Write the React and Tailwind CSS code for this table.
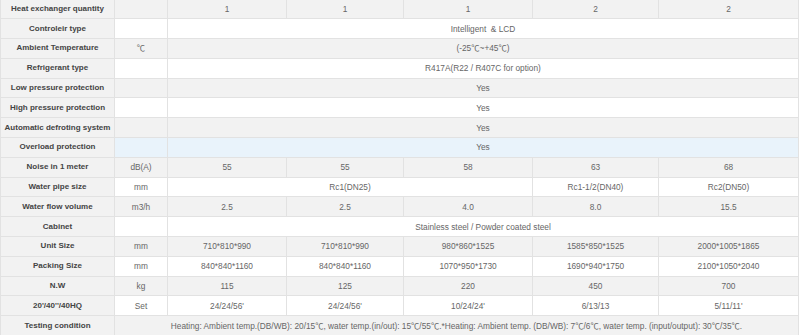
const COLS = [114, 53, 119, 117, 129, 126, 140]

const ROWS = [
  ['Heat exchanger quantity', '', ['1'], ['1'], ['1'], ['2'], ['2']],
  ['Controleir type', '', ['Intelligent \u00a0& LCD', 5]],
  ['Ambient Temperature', '℃', ['(-25℃~+45℃)', 5]],
  ['Refrigerant type', '', ['R417A(R22 / R407C for option)', 5]],
  ['Low pressure protection', '', ['Yes', 5]],
  ['High pressure protection', '', ['Yes', 5]],
  ['Automatic defroting system', '', ['Yes', 5]],
  ['Overload protection', '', ['Yes', 5]],
  ['Noise in 1 meter', 'dB(A)', ['55'], ['55'], ['58'], ['63'], ['68']],
  ['Water pipe size', 'mm', ['Rc1(DN25)', 3], ['Rc1-1/2(DN40)'], ['Rc2(DN50)']],
  ['Water flow volume', 'm3/h', ['2.5'], ['2.5'], ['4.0'], ['8.0'], ['15.5']],
  ['Cabinet', '', ['Stainless steel / Powder coated steel', 5]],
  ['Unit Size', 'mm', ['710*810*990'], ['710*810*990'], ['980*860*1525'], ['1585*850*1525'], ['2000*1005*1865']],
  ['Packing Size', 'mm', ['840*840*1160'], ['840*840*1160'], ['1070*950*1730'], ['1690*940*1750'], ['2100*1050*2040']],
  ['N.W', 'kg', ['115'], ['125'], ['220'], ['450'], ['700']],
  ["20'/40''/40HQ", 'Set', ["24/24/56'"], ["24/24/56'"], ["10/24/24'"], ['6/13/13'], ["5/11/11'"]],
  ['Testing condition', null, ['Heating: Ambient temp.(DB/WB): 20/15℃, water temp.(in/out): 15℃/55℃.*Heating: Ambient temp. (DB/WB): 7℃/6℃, water temp. (input/output): 30℃/35℃.', 6]],
]

export default function App() {
  return (
    <div className="w-[800px] h-[335px] overflow-hidden bg-white">
      <table
        className="table-fixed border-collapse w-[798px] -mt-[1.5px] text-[8.3px] leading-none text-[#666]"
        style={{ fontFamily: '"Liberation Sans", Arial, "Noto Sans CJK SC", sans-serif' }}
      >
        <colgroup>
          {COLS.map((w, i) => <col key={i} style={{ width: w }} />)}
        </colgroup>
        <tbody>
          {ROWS.map((row, r) => {
            const [label, unit, ...cells] = row
            const bg = r === 7 ? 'bg-[#e9f3fb]' : r % 2 === 0 ? 'bg-[#f2f2f2]' : 'bg-white'
            return (
              <tr key={r} className="h-[19.8px]">
                <td className="p-0 border border-[#e2e2e2] bg-[#f2f2f2] text-center text-[8px] font-bold text-[#444] whitespace-nowrap">
                  {label}
                </td>
                {unit !== null && (
                  <td className={`p-0 border border-[#e2e2e2] text-center ${bg}`}>{unit}</td>
                )}
                {cells.map(([text, span = 1], i) => (
                  <td key={i} colSpan={span} className={`p-0 border border-[#e2e2e2] text-center whitespace-nowrap ${bg}`}>
                    {text}
                  </td>
                ))}
              </tr>
            )
          })}
        </tbody>
      </table>
    </div>
  )
}
